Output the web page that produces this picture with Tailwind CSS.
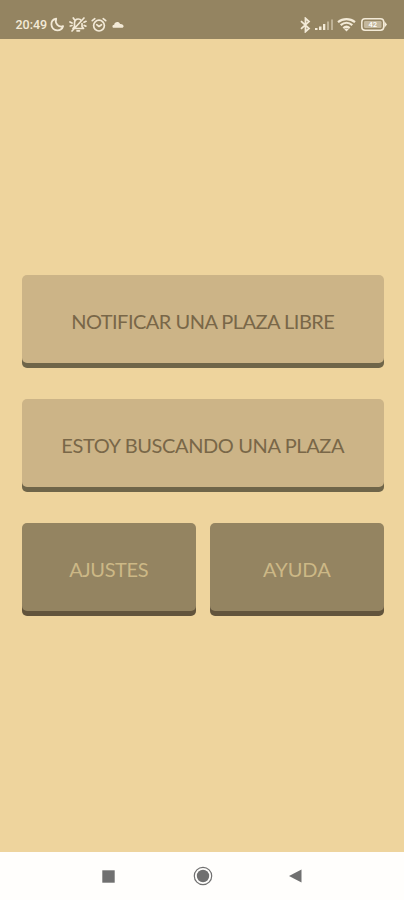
<!DOCTYPE html>
<html lang="es">
<head>
<meta charset="utf-8">
<title>Plazas</title>
<script src="https://cdn.jsdelivr.net/npm/@tailwindcss/browser@4"></script>
</head>
<body class="h-[900px] w-[404px] overflow-hidden flex flex-col bg-[#eed49d] font-['Lato',sans-serif]">
<header class="h-[39px] shrink-0 bg-[#948461] flex items-start justify-between pt-[15px] pl-[15.500px] pr-[17px] text-[#f3ead7]">
  <div class="flex items-center h-[19px]">
    <span class="font-['Roboto',sans-serif] font-medium text-[12.5px] leading-[19px] w-[34px] whitespace-nowrap">20:49</span>
    <svg class="w-[15px] h-[15px]" viewBox="0 0 15 15" fill="none" stroke="currentColor" stroke-width="1.8" stroke-linejoin="round"><path d="M6.2 1.600C2.900 2.300 1.300 4.700 1.400 7.400c.1 3.300 2.600 5.900 5.900 5.900 2.700 0 5-1.500 5.800-4.100C8.700 10.700 4.400 6.500 6.200 1.600z"/></svg>
    <svg class="w-[18px] h-[17px] ml-[4px]" viewBox="0 0 18 17" fill="none" stroke="currentColor" stroke-width="1.700" stroke-linecap="round" stroke-linejoin="round"><path d="M4 12.500l1.500-2V7c0-2.500 1.500-4 3.700-4 1.500 0 2.500.6 3.100 1.600M13 7.500v3l1.500 2H7M8 14.800h2.500M15 2L3 15M1 6l2 1M1.300 10l1.700-.5M15 6.200l2-.9M15.200 9.500l1.600.6M4.300 2l1 1.500"/></svg>
    <svg class="w-[16px] h-[16px] ml-[4px]" viewBox="0 0 16 16" fill="none" stroke="currentColor" stroke-width="1.700" stroke-linecap="round" stroke-linejoin="round"><circle cx="8" cy="8.600" r="5.400"/><path d="M1.300 3.700l2.500-2M14.700 3.700l-2.500-2M5.700 7.700L8 9.500l2.500-1.800"/></svg>
    <svg class="w-[12px] h-[8px] ml-[5px]" viewBox="0 0 12 8" fill="currentColor"><path d="M1.800 6.800C-.1 6.800 0 3.800 2.200 3.700 2.500.4 7.200.2 8 3c2.200-.2 3.600.8 3.600 2.300 0 .9-.7 1.500-1.600 1.500z"/></svg>
  </div>
  <div class="flex items-center h-[19px]">
    <svg class="w-[12px] h-[16px]" viewBox="0 0 12 16" fill="none" stroke="currentColor" stroke-width="1.800"><path d="M2 4.200l8 7.200-3.500 3.200V1.400L10 4.600l-8 7.200"/></svg>
    <svg class="w-[20px] h-[13px] ml-[3px]" viewBox="0 0 20 13" fill="currentColor"><path d="M1 10h2.500v2H1zM5 8.500h2.500V12H5zM9 6h2.300v6H9z"/><path opacity=".45" d="M13 3.500h2V12h-2zM17 1.500h2V12h-2z"/></svg>
    <svg class="w-[19px] h-[14px] ml-[3px]" viewBox="0 0 19 14" fill="none" stroke="currentColor" stroke-width="2.200"><path d="M1 4.200c5-4.100 12-4.100 17 0M3.700 7.200c3.500-3 8.100-3 11.600 0M6.300 10.100c2-1.700 4.400-1.700 6.400 0"/><path d="M7.300 11.200L9.500 13.500l2.200-2.300c-1.300-1-3.100-1-4.400 0z" fill="currentColor" stroke="none"/></svg>
    <svg class="w-[26px] h-[13px] ml-[5px]" viewBox="0 0 26 13"><rect x=".8" y=".8" width="21.900" height="11.400" rx="3.200" fill="none" stroke="currentColor" stroke-width="1.500"/><rect x="3" y="3" width="17.500" height="7" rx="1.300" fill="currentColor" opacity=".5"/><path d="M23.300 3l2.700 3.500-2.700 3.500z" fill="currentColor"/><text x="11.700" y="9.200" text-anchor="middle" fill="#fff" font-family="Roboto, sans-serif" font-size="7.500" font-weight="500">42</text></svg>
  </div>
</header>
<main class="flex-1 pt-[235.500px] pl-[21.500px] pr-[20px] flex flex-col gap-[36px] text-[20px]">
  <button class="h-[88px] shrink-0 w-full rounded-[5px] bg-[#ccb487] shadow-[0_5px_0_#6f6549] text-[#796748] pt-[5px] whitespace-nowrap"><span class="tracking-[-0.52px]">NOTIFICAR UNA PLAZA LIBRE</span></button>
  <button class="h-[88px] shrink-0 w-full rounded-[5px] bg-[#ccb487] shadow-[0_5px_0_#6f6549] text-[#796748] pt-[5px] whitespace-nowrap"><span class="tracking-[-0.38px]">ESTOY BUSCANDO UNA PLAZA</span></button>
  <div class="grid grid-cols-2 gap-[14px]">
    <button class="h-[88px] rounded-[5px] bg-[#948461] shadow-[0_5px_0_#62543c] text-[#ccb886] pt-[5px]"><span class="tracking-[-0.4px]">AJUSTES</span></button>
    <button class="h-[88px] rounded-[5px] bg-[#948461] shadow-[0_5px_0_#62543c] text-[#ccb886] pt-[5px]"><span>AYUDA</span></button>
  </div>
</main>
<nav class="h-[48px] shrink-0 bg-[#fffefc] flex items-center pl-[102px] text-[#707070]">
  <svg class="w-[13px] h-[13px]" viewBox="0 0 13 13"><rect x=".3" y=".3" width="12.400" height="12.400" fill="currentColor"/></svg>
  <svg class="w-[20px] h-[20px] ml-[78px]" viewBox="0 0 20 20"><circle cx="10" cy="10" r="8.700" fill="none" stroke="currentColor" stroke-width="1.200"/><circle cx="10" cy="10" r="6.200" fill="currentColor"/></svg>
  <svg class="w-[13px] h-[14px] ml-[76px]" viewBox="0 0 13 14"><path d="M0 7L12.500.5v13z" fill="currentColor"/></svg>
</nav>
</body>
</html>
